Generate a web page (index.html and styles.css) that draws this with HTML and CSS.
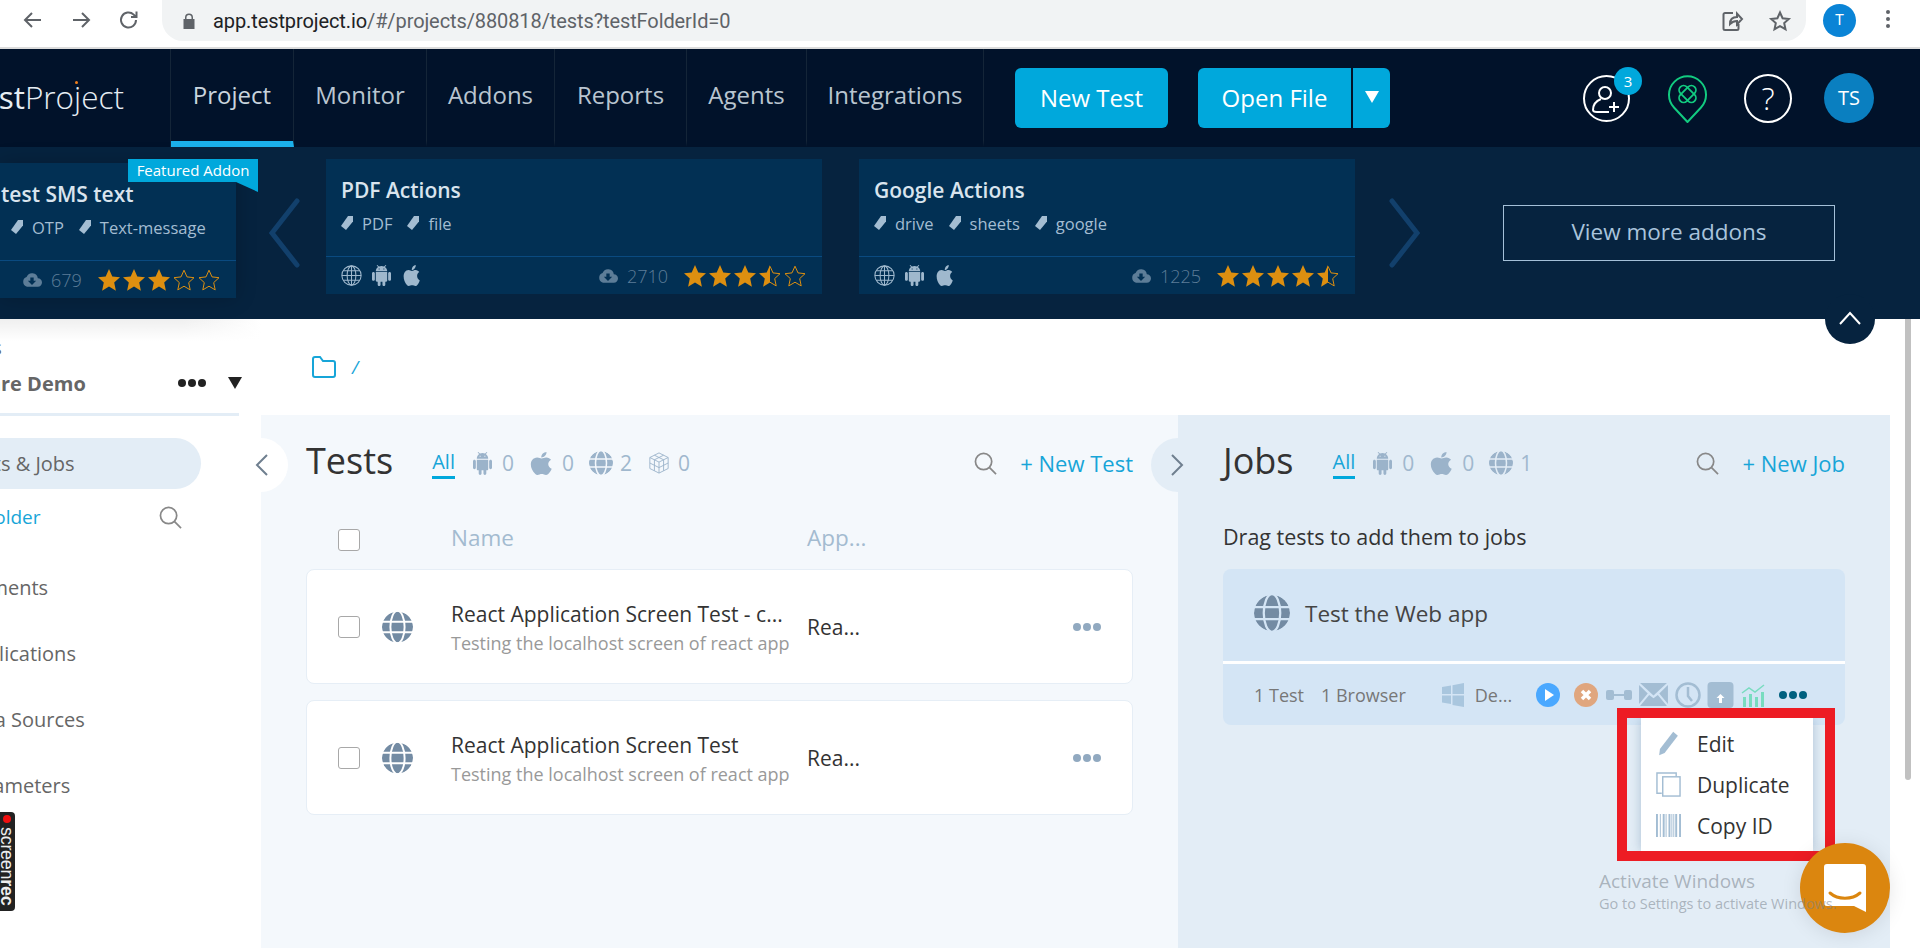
FILE: index.html
```html
<!DOCTYPE html>
<html lang="en">

<head>
	<meta charset="UTF-8">
	<title>TestProject</title>
	<link rel="stylesheet" href="styles.css">
</head>

<body>
	<svg class="sprites" width="0" height="0">
		<defs>
			<mask id="globe-cut">
				<circle cx="12" cy="12" r="12" fill="#fff" />
				<g fill="none" stroke="#000" stroke-width="1.5">
					<ellipse cx="12" cy="12" rx="5.5" ry="12.5" />
					<path d="M0 8h24M0 16h24" />
				</g>
			</mask>
			<symbol id="i-globe" viewBox="0 0 24 24">
				<circle cx="12" cy="12" r="12" fill="currentColor" mask="url(#globe-cut)" />
			</symbol>
			<symbol id="i-globe-line" viewBox="0 0 24 24">
				<g fill="none" stroke="currentColor" stroke-width="1.2">
					<circle cx="12" cy="12" r="11" />
					<ellipse cx="12" cy="12" rx="5" ry="11" />
					<path d="M12 1v22M1 12h22M2.600 6.500h18.800M2.600 17.500h18.800" />
				</g>
			</symbol>
			<symbol id="i-android" viewBox="2 0 20 24" preserveAspectRatio="none">
				<path fill="currentColor" d="M6 18c0 .55.45 1 1 1h1v3.500c0 .83.67 1.500 1.500 1.500s1.500-.67 1.500-1.500V19h2v3.500c0 .83.67 1.500 1.500 1.500s1.500-.67 1.500-1.500V19h1c.55 0 1-.45 1-1V8H6v10zM3.500 8C2.670 8 2 8.670 2 9.500v7c0 .83.67 1.500 1.500 1.500S5 17.330 5 16.500v-7C5 8.670 4.330 8 3.500 8zm17 0c-.83 0-1.500.67-1.500 1.500v7c0 .83.67 1.500 1.500 1.500s1.500-.67 1.500-1.500v-7c0-.83-.67-1.500-1.500-1.500zm-4.970-5.840l1.300-1.300c.2-.2.2-.51 0-.71-.2-.2-.51-.2-.71 0l-1.480 1.480C13.850 1.230 12.950 1 12 1c-.96 0-1.860.23-2.660.63L7.850.15c-.2-.2-.51-.2-.71 0-.2.2-.2.51 0 .71l1.310 1.310C6.970 3.260 6 5.010 6 7h12c0-1.990-.97-3.750-2.470-4.840zM10 5H9V4h1v1zm5 0h-1V4h1v1z" />
			</symbol>
			<symbol id="i-apple" viewBox="3.800 3 16 18" preserveAspectRatio="none">
				<path fill="currentColor" d="M17.050 20.280c-.98.95-2.050.8-3.080.35-1.090-.46-2.090-.48-3.240 0-1.440.62-2.200.44-3.060-.35C2.790 15.250 3.510 7.590 9.050 7.310c1.350.07 2.290.74 3.080.8 1.180-.24 2.310-.93 3.570-.84 1.510.12 2.650.72 3.400 1.800-3.120 1.870-2.380 5.980.48 7.130-.57 1.500-1.310 2.990-2.540 4.090zM12.030 7.250c-.15-2.230 1.660-4.070 3.740-4.250.29 2.580-2.340 4.500-3.740 4.250z" />
			</symbol>
			<symbol id="i-box" viewBox="0 0 24 24">
				<g fill="none" stroke="currentColor" stroke-width="1">
					<path d="M12 1l10 5v12l-10 5-10-5V6z" />
					<path d="M2 6l10 5 10-5M12 11v12M7 3.500l10 5v12M17 3.500l-10 5v12M2 12l10 5 10-5" />
				</g>
			</symbol>
			<symbol id="i-search" viewBox="0 0 24 24">
				<g fill="none" stroke="currentColor" stroke-width="1.800">
					<circle cx="10" cy="10" r="8.500" />
					<path d="M16 16l7 7" />
				</g>
			</symbol>
			<symbol id="i-tag" viewBox="0 0 12 14">
				<path fill="currentColor" d="M7 0h5v5.500L5 14 0 10z" />
			</symbol>
			<symbol id="i-cloud" viewBox="0 0 24 24">
				<path fill="currentColor" d="M19 10a7 7 0 0 0-13.500-1.500A6 6 0 0 0 6 20h13a5 5 0 0 0 0-10zm-7 8l-5-5h3V9h4v4h3z" />
			</symbol>
			<symbol id="i-star" viewBox="0 0 24 24">
				<path fill="currentColor" d="M12 1l3.300 7.400 7.700.8-5.800 5.400 1.700 8.100L12 18.500l-6.900 4.200 1.700-8.100L1 9.200l7.700-.8z" />
			</symbol>
			<symbol id="i-star-o" viewBox="0 0 24 24">
				<path fill="none" stroke="currentColor" d="M12 2.200l3 6.700 7 .8-5.300 4.900 1.500 7.300-6.200-3.700-6.200 3.700 1.500-7.300L2 9.700l7-.8z" />
			</symbol>
			<symbol id="i-star-half" viewBox="0 0 24 24">
				<path fill="none" stroke="currentColor" d="M12 2.200l3 6.700 7 .8-5.300 4.900 1.500 7.300-6.200-3.700" />
				<path fill="currentColor" d="M12 1l-3.300 7.400-7.700.8 5.800 5.400-1.700 8.100 6.900-4.200z" />
			</symbol>
		</defs>
	</svg>

	<header class="browser-bar">
		<svg class="chrome-icon first" viewBox="0 0 24 24"><path d="M20 12H5M11 5l-7 7 7 7" /></svg>
		<svg class="chrome-icon" viewBox="0 0 24 24"><path d="M4 12h15M13 5l7 7-7 7" /></svg>
		<svg class="chrome-icon" viewBox="0 0 24 24"><path d="M19 12a7.500 7.500 0 1 1-2.300-5.400L19 9M19.500 3.500V9H14" /></svg>
		<div class="omnibox">
			<svg class="lock" viewBox="0 0 12 16"><path d="M2 6V4.500a4 4 0 0 1 8 0V6h1.500v10H.5V6zm1.500 0h5V4.500a2.500 2.500 0 0 0-5 0z" /></svg>
			<span class="url">app.testproject.io<span class="url-dim">/#/projects/880818/tests?testFolderId=0</span></span>
			<svg class="chrome-icon share" viewBox="0 0 24 24"><path d="M13 4h-8a1.500 1.500 0 0 0-1.500 1.500v14A1.500 1.500 0 0 0 5 21h12a1.500 1.500 0 0 0 1.500-1.500V15M10 15c0-5 3-7 7-7V4.500L22 10l-5 5.500V12c-3 0-5 1-7 3z" /></svg>
			<svg class="chrome-icon star" viewBox="0 0 24 24"><path d="M12 3.500l2.600 5.700 6.200.7-4.600 4.200 1.300 6.100-5.500-3.100-5.500 3.100 1.300-6.100-4.600-4.200 6.200-.7z" /></svg>
		</div>
		<div class="chrome-avatar">T</div>
		<div class="chrome-menu"><i></i><i></i><i></i></div>
	</header>

	<nav class="topnav">
		<div class="logo"><span class="logo-name"><b>Test</b>Project</span><i class="logo-dot"></i></div>
		<a class="nav-item active">Project</a>
		<a class="nav-item">Monitor</a>
		<a class="nav-item">Addons</a>
		<a class="nav-item">Reports</a>
		<a class="nav-item">Agents</a>
		<a class="nav-item">Integrations</a>
		<span class="btn new-test">New Test</span>
		<span class="btn open-file">Open File</span>
		<span class="btn open-caret"><i></i></span>
		<div class="nav-user">
			<svg viewBox="0 0 47 49" fill="none" stroke="#fff" stroke-width="2"><circle cx="23.500" cy="24.500" r="22.500" /><circle cx="22" cy="19" r="6" /><path d="M18 25c-5 2-8 6-8 11 0 2 2 2 4 2h12M31 28v10M26 33h10" /></svg>
			<span class="badge">3</span>
		</div>
		<svg class="nav-pin" viewBox="0 0 39 49" fill="none" stroke="#12cb80" stroke-width="2"><path d="M19.500 48L6 33.500A18.500 18.500 0 1 1 33 33.500z" /><g stroke-width="1.800"><rect x="9.500" y="15.500" width="20" height="9" rx="4.500" transform="rotate(45 19.500 20)" /><rect x="9.500" y="15.500" width="20" height="9" rx="4.500" transform="rotate(-45 19.500 20)" /></g></svg>
		<div class="nav-help">?</div>
		<div class="nav-avatar">TS</div>
	</nav>

	<section class="addons">
		<article class="addon addon-first">
			<h3 class="addon-title">test SMS text</h3>
			<div class="addon-tags">
				<svg class="tag"><use href="#i-tag" /></svg>OTP
				<svg class="tag"><use href="#i-tag" /></svg>Text-message
			</div>
			<div class="addon-foot">
				<span class="addon-count"><svg class="cloud"><use href="#i-cloud" /></svg>679</span>
				<span class="stars">
					<svg><use href="#i-star" /></svg><svg><use href="#i-star" /></svg><svg><use href="#i-star" /></svg><svg><use href="#i-star-o" /></svg><svg><use href="#i-star-o" /></svg>
				</span>
			</div>
			<span class="flag">Featured Addon</span>
		</article>
		<svg class="addon-arrow prev" viewBox="0 0 32 70"><path d="M29 3L4 35l25 32" /></svg>
		<article class="addon">
			<h3 class="addon-title">PDF Actions</h3>
			<div class="addon-tags">
				<svg class="tag"><use href="#i-tag" /></svg>PDF
				<svg class="tag"><use href="#i-tag" /></svg>file
			</div>
			<div class="addon-foot">
				<span class="platforms">
					<svg class="p-globe"><use href="#i-globe-line" /></svg><svg class="p-android"><use href="#i-android" /></svg><svg class="p-apple"><use href="#i-apple" /></svg>
				</span>
				<span class="addon-count"><svg class="cloud"><use href="#i-cloud" /></svg>2710</span>
				<span class="stars">
					<svg><use href="#i-star" /></svg><svg><use href="#i-star" /></svg><svg><use href="#i-star" /></svg><svg><use href="#i-star-half" /></svg><svg><use href="#i-star-o" /></svg>
				</span>
			</div>
		</article>
		<article class="addon addon-last">
			<h3 class="addon-title">Google Actions</h3>
			<div class="addon-tags">
				<svg class="tag"><use href="#i-tag" /></svg>drive
				<svg class="tag"><use href="#i-tag" /></svg>sheets
				<svg class="tag"><use href="#i-tag" /></svg>google
			</div>
			<div class="addon-foot">
				<span class="platforms">
					<svg class="p-globe"><use href="#i-globe-line" /></svg><svg class="p-android"><use href="#i-android" /></svg><svg class="p-apple"><use href="#i-apple" /></svg>
				</span>
				<span class="addon-count"><svg class="cloud"><use href="#i-cloud" /></svg>1225</span>
				<span class="stars">
					<svg><use href="#i-star" /></svg><svg><use href="#i-star" /></svg><svg><use href="#i-star" /></svg><svg><use href="#i-star" /></svg><svg><use href="#i-star-half" /></svg>
				</span>
			</div>
		</article>
		<svg class="addon-arrow next" viewBox="0 0 32 70"><path d="M3 3l25 32L3 67" /></svg>
		<a class="more-addons">View more addons</a>
	</section>

	<div class="content">
		<aside class="sidebar">
			<div class="side-label">Projects</div>
			<div class="side-project">
				<span class="side-project-name">Software Demo</span>
				<span class="side-dots"><i></i><i></i><i></i></span>
				<i class="side-caret"></i>
			</div>
			<div class="side-link active"><span>Tests &amp; Jobs</span></div>
			<div class="side-folder">
				<span>+ New Folder</span>
				<svg class="icon-search"><use href="#i-search" /></svg>
			</div>
			<div class="side-link"><span>Elements</span></div>
			<div class="side-link"><span>Applications</span></div>
			<div class="side-link"><span>Data Sources</span></div>
			<div class="side-link"><span>Parameters</span></div>
		</aside>

		<main class="main">
			<div class="breadcrumb">
				<svg class="folder" viewBox="0 0 24 22"><path d="M1 3a2 2 0 0 1 2-2h5l3 4h10a2 2 0 0 1 2 2v12a2 2 0 0 1-2 2H3a2 2 0 0 1-2-2z" /></svg>
				<span>/</span>
			</div>
			<div class="panels">
				<section class="panel tests">
					<span class="panel-toggle left"><svg viewBox="0 0 14 24"><path d="M12 2L2 12l10 10" /></svg></span>
					<div class="panel-head">
						<h2 class="panel-title">Tests</h2>
						<a class="filter-all">All</a>
						<span class="filter"><svg class="f-android"><use href="#i-android" /></svg>0</span>
						<span class="filter"><svg class="f-apple"><use href="#i-apple" /></svg>0</span>
						<span class="filter f-globe-wrap"><svg class="f-globe"><use href="#i-globe" /></svg>2</span>
						<span class="filter f-box-wrap"><svg class="f-box"><use href="#i-box" /></svg>0</span>
						<svg class="icon-search head-search"><use href="#i-search" /></svg>
						<a class="panel-new">+ New Test</a>
					</div>
					<div class="test-cols">
						<span class="check"></span>
						<span></span>
						<span>Name</span>
						<span>App...</span>
					</div>
					<div class="test-row">
						<span class="check"></span>
						<svg class="row-globe"><use href="#i-globe" /></svg>
						<div>
							<div class="test-name">React Application Screen Test - c...</div>
							<div class="test-desc">Testing the localhost screen of react app</div>
						</div>
						<span class="test-app">Rea...</span>
						<span class="row-dots"><i></i><i></i><i></i></span>
					</div>
					<div class="test-row">
						<span class="check"></span>
						<svg class="row-globe"><use href="#i-globe" /></svg>
						<div>
							<div class="test-name">React Application Screen Test</div>
							<div class="test-desc">Testing the localhost screen of react app</div>
						</div>
						<span class="test-app">Rea...</span>
						<span class="row-dots"><i></i><i></i><i></i></span>
					</div>
				</section>

				<section class="panel jobs">
					<span class="panel-toggle right"><svg viewBox="0 0 14 24"><path d="M2 2l10 10L2 22" /></svg></span>
					<div class="panel-head">
						<h2 class="panel-title">Jobs</h2>
						<a class="filter-all">All</a>
						<span class="filter"><svg class="f-android"><use href="#i-android" /></svg>0</span>
						<span class="filter"><svg class="f-apple"><use href="#i-apple" /></svg>0</span>
						<span class="filter f-globe-wrap"><svg class="f-globe"><use href="#i-globe" /></svg>1</span>
						<svg class="icon-search head-search"><use href="#i-search" /></svg>
						<a class="panel-new">+ New Job</a>
					</div>
					<p class="jobs-hint">Drag tests to add them to jobs</p>
					<div class="job-card">
						<div class="job-head">
							<svg class="job-globe"><use href="#i-globe" /></svg>
							<span>Test the Web app</span>
						</div>
						<div class="job-foot">
							<span class="job-tests">1 Test</span>
							<span class="job-browser">1 Browser</span>
							<svg class="ji ji-win" viewBox="0 0 22 24"><path d="M0 4l9-1.500V11H0zM10.500 2.300L22 0v11H10.500zM0 12.500h9V21L0 19.500zM10.500 12.500H22V24l-11.500-2z" /></svg>
							<span class="job-device">De...</span>
							<svg class="ji ji-play" viewBox="0 0 24 24"><circle cx="12" cy="12" r="12" /><path class="w" d="M9 6l9 6-9 6z" /></svg>
							<svg class="ji ji-stop" viewBox="0 0 24 24"><circle cx="12" cy="12" r="12" /><path class="ws" d="M8 8l8 8M16 8l-8 8" /></svg>
							<svg class="ji ji-link" viewBox="0 0 26 12"><rect x="0" y="1" width="8" height="10" rx="2" /><rect x="18" y="1" width="8" height="10" rx="2" /><rect x="7" y="5" width="12" height="2" /></svg>
							<svg class="ji ji-mail" viewBox="0 0 30 26"><path d="M1 1h28L15 14zM0 3l9 9-9 11zM30 3l-9 9 9 11zM1 25l9.500-11.500L15 17l4.500-3.500L29 25z" /></svg>
							<svg class="ji ji-clock" viewBox="0 0 26 26"><circle cx="13" cy="13" r="11.500" /><path d="M13 5v9l4 5" /></svg>
							<svg class="ji ji-upload" viewBox="0 0 26 26"><rect width="26" height="26" rx="4" /><path class="w" d="M9 16l4-4 4 4h-2.500v5h-3v-5z" /></svg>
							<svg class="ji ji-chart" viewBox="0 0 24 24"><path d="M2 14h3v10H2zM8 11h3v13H8zM14 14h3v10h-3zM20 9h3v15h-3z" /><path class="cs" d="M1 10l7-5 6 4 9-7" /></svg>
							<span class="job-dots"><i></i><i></i><i></i></span>
						</div>
					</div>
					<div class="job-menu">
						<div class="job-menu-item">
							<svg viewBox="0 0 26 32"><path d="M19 1l6 5L8 28l-7 3 1-8z" /></svg>Edit
						</div>
						<div class="job-menu-item">
							<svg viewBox="0 0 26 26" class="dup"><path d="M21 5V1H1v21h5" /><rect x="7" y="5" width="18" height="20" /></svg>Duplicate
						</div>
						<div class="job-menu-item">
							<svg viewBox="0 0 26 24"><path d="M0 0h2v24H0zM4 0h1v24H4zM7 0h2v24H7zM10 0h1v24h-1zM13 0h2v24h-2zM16 0h1v24h-1zM18 0h1v24h-1zM20 0h2v24h-2zM24 0h2v24h-2z" /></svg>Copy ID
						</div>
					</div>
					<div class="red-box"></div>
				</section>
				<div class="page-gutter"></div>
			</div>
		</main>
	</div>

	<div class="collapse-strip"><svg viewBox="0 0 24 14"><path d="M2 13L12 2l10 11" /></svg></div>
	<div class="scrollbar-thumb"></div>
	<div class="screenrec"><i></i><span>screen<b>rec</b></span></div>
	<div class="chat-button">
		<svg viewBox="0 0 42 48"><path d="M3 0h36a3 3 0 0 1 3 3v45l-12-6H3a3 3 0 0 1-3-3V3a3 3 0 0 1 3-3z" fill="#fff" /><path d="M6 29c8 7 22 7 30 0" fill="none" stroke="#db860f" stroke-width="3" stroke-linecap="round" /></svg>
	</div>
	<div class="activate">
		<div class="activate-title">Activate Windows</div>
		<div class="activate-sub">Go to Settings to activate Windows.</div>
	</div>
</body>

</html>
```

FILE: styles.css
```css
* {
	box-sizing: border-box;
}

html,
body {
	margin: 0;
	height: 948px;
	overflow: hidden;
}

body {
	position: relative;
	background-color: #fff;
	color: #333;
	font-family: "Open Sans", sans-serif;
}

h2,
h3,
p {
	margin: 0;
	font-weight: normal;
}

.sprites {
	position: absolute;
}

/* browser chrome */
.browser-bar {
	display: flex;
	align-items: flex-start;
	height: 49px;
	background-color: #fff;
	border-bottom: 2px solid #dcdcdc;
}

.chrome-icon {
	flex: none;
	width: 24px;
	height: 24px;
	margin: 8px 24px 0 0;
	fill: none;
	stroke: #5f6368;
	stroke-width: 2;
}

.chrome-icon.first {
	margin-left: 21px;
}

.omnibox {
	display: flex;
	align-items: center;
	width: 1644px;
	height: 41px;
	margin-left: -3px;
	padding: 0 0 0 21px;
	background-color: #f1f3f4;
	border-radius: 0 0 21px 21px;
	font-family: "Roboto", sans-serif;
	font-size: 20px;
}

.lock {
	width: 12px;
	height: 16px;
	margin-right: 18px;
	fill: #5f6368;
}

.url {
	color: #202124;
	white-space: nowrap;
	letter-spacing: -0.1px;
}

.url-dim {
	color: #5f6368;
}

.omnibox .chrome-icon {
	margin: 0;
}

.omnibox .share {
	margin-left: auto;
}

.omnibox .star {
	margin: 0 14px 0 24px;
}

.chrome-avatar {
	flex: none;
	width: 33px;
	height: 33px;
	margin: 4px 0 0 17px;
	border-radius: 50%;
	background-color: #0a84d6;
	color: #fff;
	font: 15px/33px "Roboto", sans-serif;
	text-align: center;
}

.chrome-menu {
	display: flex;
	flex-direction: column;
	gap: 3px;
	margin: 10px 0 0 30px;
}

.chrome-menu i {
	width: 4px;
	height: 4px;
	border-radius: 50%;
	background-color: #5f6368;
}

/* top nav */
.topnav {
	display: flex;
	align-items: center;
	height: 98px;
	background-color: #01122a;
}

.logo {
	position: relative;
	display: flex;
	justify-content: flex-end;
	align-self: stretch;
	align-items: center;
	flex: none;
	width: 171px;
	padding: 0 46px 4px 0;
	overflow: hidden;
	border-right: 1px solid #142538;
}

.logo-name {
	color: #e6edf3;
	font-size: 31.500px;
	font-weight: 300;
	white-space: nowrap;
}

.logo-name b {
	font-weight: 400;
}

.logo-dot {
	position: absolute;
	left: 75px;
	top: 32px;
	width: 3px;
	height: 3px;
	border-radius: 50%;
	background-color: #ef7d1a;
}

.nav-item {
	display: flex;
	align-items: center;
	align-self: stretch;
	justify-content: center;
	flex: none;
	width: 133px;
	padding-bottom: 2px;
	border-right: 1px solid #142538;
	border-bottom: 6px solid transparent;
	color: #b9c5d0;
	font-size: 24px;
}

.nav-item:nth-of-type(1) {
	width: 123px;
}

.nav-item:nth-of-type(3) {
	width: 128px;
}

.nav-item:nth-of-type(4) {
	width: 132px;
}

.nav-item:nth-of-type(5) {
	width: 120px;
}

.nav-item:nth-of-type(6) {
	width: 177px;
}

.nav-item.active {
	color: #c9d4de;
	border-bottom-color: #1bb1ec;
}

.btn {
	display: flex;
	align-items: center;
	justify-content: center;
	flex: none;
	height: 60px;
	padding-bottom: 2px;
	background-color: #00a8dc;
	color: #fff;
	font-size: 24px;
}

.new-test {
	width: 153px;
	margin-left: 31px;
	border-radius: 6px;
}

.open-file {
	width: 153px;
	margin-left: 30px;
	border-radius: 6px 0 0 6px;
}

.open-caret {
	width: 37px;
	margin-left: 2px;
	border-radius: 0 6px 6px 0;
}

.open-caret i {
	border-left: 7px solid transparent;
	border-right: 7px solid transparent;
	border-top: 12px solid #fff;
}

.nav-user {
	position: relative;
	flex: none;
	width: 47px;
	height: 49px;
	margin-left: 193px;
}

.nav-user svg {
	display: block;
	width: 47px;
	height: 49px;
}

.badge {
	position: absolute;
	left: 31px;
	top: -7px;
	width: 28px;
	height: 28px;
	border-radius: 50%;
	background-color: #00a8dc;
	color: #fff;
	font-size: 15px;
	line-height: 28px;
	text-align: center;
}

.nav-pin {
	flex: none;
	width: 39px;
	height: 49px;
	margin-left: 38px;
}

.nav-help {
	flex: none;
	width: 48px;
	height: 49px;
	margin-left: 37px;
	border: 2px solid #fff;
	border-radius: 50%;
	color: #fff;
	font-size: 31px;
	font-weight: 300;
	line-height: 44px;
	text-align: center;
}

.nav-avatar {
	flex: none;
	width: 50px;
	height: 50px;
	margin-left: 32px;
	border-radius: 50%;
	background-color: #0a7fc0;
	color: #fff;
	font-size: 20px;
	line-height: 50px;
	text-align: center;
}

/* addons strip */
.addons {
	display: flex;
	align-items: flex-start;
	height: 172px;
	padding-top: 12px;
	background-color: #06233f;
}

.addon {
	position: relative;
	display: flex;
	flex-direction: column;
	flex: none;
	width: 496px;
	height: 135px;
	background-color: #023054;
}

.addon-first {
	width: 236px;
	margin-top: 4px;
	box-shadow: 0 0 20px rgba(0, 0, 0, 0.2);
}

.addon-last {
	margin-left: 37px;
}

.addon-title {
	padding: 17px 0 0 15px;
	color: #d9e4ee;
	font-size: 21px;
	font-weight: 600;
	line-height: 28px;
}

.addon-first .addon-title {
	padding-left: 1px;
}

.addon-tags {
	display: flex;
	align-items: center;
	height: 24px;
	margin-top: 7px;
	padding-left: 15px;
	color: #a4bdd2;
	font-size: 16.500px;
}

.addon-first .addon-tags {
	padding-left: 11px;
}

.tag {
	width: 12px;
	height: 14px;
	margin: 0 9px 0 0;
	color: #a4bdd2;
}

.tag:not(:first-child) {
	margin-left: 15px;
}

.addon-foot {
	display: flex;
	align-items: center;
	height: 38px;
	margin-top: auto;
	padding: 0 15px;
	border-top: 1px solid #0a4a80;
	color: #a4bdd2;
}

.platforms {
	display: flex;
	align-items: center;
	color: #9fb8cd;
}

.p-globe {
	width: 21px;
	height: 21px;
}

.p-android {
	width: 19px;
	height: 21px;
	margin-left: 10px;
}

.p-apple {
	width: 17px;
	height: 21px;
	margin-left: 12px;
}

.addon-count {
	display: flex;
	align-items: center;
	margin-left: auto;
	color: #5d7d98;
	font-size: 18px;
	font-weight: 300;
}

.addon-first .addon-count {
	margin-left: 6px;
}

.cloud {
	width: 22px;
	height: 20px;
	margin-right: 8px;
	color: #5d7d98;
}

.stars {
	display: flex;
	gap: 1px;
	margin-left: 15px;
	color: #dd8f10;
}

.stars svg {
	width: 24px;
	height: 24px;
}

.flag {
	position: absolute;
	left: 128px;
	top: -4px;
	width: 130px;
	height: 23px;
	background-color: #00a8dc;
	color: #fff;
	font-size: 15px;
	line-height: 23px;
	text-align: center;
	white-space: nowrap;
}

.flag::after {
	content: "";
	position: absolute;
	right: 0;
	top: 23px;
	border-top: 10px solid #00a8dc;
	border-left: 22px solid transparent;
}

.addon-arrow {
	flex: none;
	width: 32px;
	height: 70px;
	margin-top: 39px;
	fill: none;
	stroke: #12406c;
	stroke-width: 5;
	stroke-linecap: round;
}

.addon-arrow.prev {
	margin: 39px 26px 0 32px;
}

.addon-arrow.next {
	margin-left: 34px;
}

.more-addons {
	flex: none;
	width: 332px;
	height: 56px;
	margin: 46px 0 0 82px;
	border: 1px solid #a4c0d8;
	color: #a9c4dc;
	font-size: 22.500px;
	line-height: 52px;
	text-align: center;
}

/* sidebar */
.content {
	display: flex;
	height: 629px;
}

.sidebar {
	flex: none;
	width: 261px;
	background:
		linear-gradient(to bottom, rgba(255, 255, 255, 0), #fff 22px) no-repeat 0 0 / 100% 22px,
		linear-gradient(to right, #efefef 70%, #fff) no-repeat 0 0 / 100% 22px;
	color: #666;
	font-size: 20px;
	overflow: hidden;
}

.side-label {
	height: 27px;
	margin-top: 15px;
	margin-left: -73px;
	color: #666;
	font-size: 20px;
	line-height: 27px;
}

.side-project {
	display: flex;
	align-items: center;
	width: 239px;
	height: 55px;
	padding-bottom: 8px;
	border-bottom: 3px solid #e3edf6;
}

.side-project-name {
	margin-left: -68px;
	color: #666;
	font-weight: 700;
	white-space: nowrap;
}

.side-dots,
.row-dots,
.job-dots {
	display: flex;
	gap: 2px;
}

.side-dots {
	margin-left: 92px;
}

.side-dots i,
.row-dots i,
.job-dots i {
	width: 8px;
	height: 8px;
	border-radius: 50%;
	background-color: #222;
}

.side-caret {
	margin-left: 22px;
	border-left: 7px solid transparent;
	border-right: 7px solid transparent;
	border-top: 12px solid #222;
}

.side-link {
	display: flex;
	align-items: center;
	height: 66px;
	white-space: nowrap;
}

.side-link span {
	margin-left: -38px;
}

.side-link.active {
	width: 201px;
	height: 51px;
	margin-top: 22px;
	border-radius: 0 26px 26px 0;
	background-color: #e3edf6;
}

.side-folder {
	display: flex;
	align-items: center;
	height: 56px;
	margin-bottom: 9px;
	color: #17a5d8;
	font-size: 19px;
	white-space: nowrap;
}

.side-folder span {
	margin-left: -76px;
}

.side-folder .icon-search {
	margin-left: 118px;
}

.icon-search {
	flex: none;
	width: 23px;
	height: 23px;
	color: #888;
}

/* main area */
.main {
	display: flex;
	flex-direction: column;
	flex: 1;
	min-width: 0;
}

.breadcrumb {
	display: flex;
	align-items: center;
	flex: none;
	height: 96px;
	padding-left: 51px;
	color: #17a5d8;
	font-size: 18px;
	font-style: italic;
}

.folder {
	width: 24px;
	height: 22px;
	margin-right: 16px;
	fill: none;
	stroke: #17a5d8;
	stroke-width: 2;
}

.panels {
	display: flex;
	flex: 1;
}

.panel {
	position: relative;
	flex: none;
	padding: 0 45px;
}

.tests {
	width: 917px;
	background-color: #f4f8fc;
}

.jobs {
	width: 712px;
	background-color: #e3edf6;
}

.page-gutter {
	flex: 1;
	background-color: #fff;
}

.panel-toggle {
	position: absolute;
	top: 23px;
	display: flex;
	align-items: center;
	width: 27px;
	height: 54px;
}

.panel-toggle svg {
	width: 14px;
	height: 24px;
	fill: none;
	stroke: #6f7f8f;
	stroke-width: 2;
}

.panel-toggle.left {
	left: 0;
	justify-content: flex-start;
	border-radius: 0 27px 27px 0;
	background-color: #fff;
}

.panel-toggle.left svg {
	margin-left: -6px;
}

.panel-toggle.right {
	left: -27px;
	justify-content: flex-end;
	border-radius: 27px 0 0 27px;
	background-color: #e3edf6;
}

.panel-toggle.right svg {
	margin-right: -6px;
}

.panel-head {
	display: flex;
	align-items: center;
	height: 96px;
}

.panel-title {
	margin-top: -5px;
	color: #333;
	font-size: 36px;
	line-height: 48px;
}

.filter-all {
	margin: 3px 0 0 39px;
	padding-bottom: 2px;
	border-bottom: 3px solid #00a8dc;
	color: #17a5d8;
	font-size: 20px;
	line-height: 24px;
}

.filter {
	display: flex;
	align-items: center;
	margin-left: 18px;
	color: #a0b8ce;
	font-size: 21px;
}

.filter svg {
	margin-right: 10px;
	color: #9bb3ca;
}

.filter.f-globe-wrap {
	margin-left: 15px;
}

.filter.f-box-wrap {
	margin-left: 16px;
}

.f-android {
	width: 19px;
	height: 23px;
}

.f-apple {
	width: 22px;
	height: 23px;
	margin-left: -2px;
}

.filter .f-globe {
	width: 24px;
	height: 24px;
	margin-right: 7px;
}

.filter .f-box {
	width: 22px;
	height: 24px;
	margin-right: 8px;
}

.head-search {
	margin-left: auto;
}

.panel-new {
	margin-left: 23px;
	color: #17a5d8;
	font-size: 22px;
	white-space: nowrap;
}

.check {
	width: 22px;
	height: 22px;
	border: 1px solid #a8a8a8;
	border-radius: 3px;
	background-color: #fff;
}

.test-cols,
.test-row {
	display: grid;
	grid-template-columns: 44px 69px 356px 1fr auto;
	align-items: center;
}

.test-cols {
	height: 58px;
	padding: 0 32px;
	color: #a3bbd0;
	font-size: 22.500px;
}

.test-cols > span:nth-child(n+3) {
	margin-top: -6px;
}

.test-row {
	height: 115px;
	margin-bottom: 16px;
	padding: 0 31px;
	background-color: #fff;
	border: 1px solid #e6eef6;
	border-radius: 8px;
}

.row-globe {
	width: 31px;
	height: 32px;
	color: #738ba3;
}

.test-name {
	margin-top: 2px;
	color: #333;
	font-size: 21px;
	line-height: 30px;
	white-space: nowrap;
}

.test-desc {
	color: #999;
	font-size: 18px;
	line-height: 28px;
	white-space: nowrap;
}

.test-app {
	color: #333;
	font-size: 21px;
}

.row-dots i {
	background-color: #91a9c0;
}

/* job card */
.jobs-hint {
	height: 58px;
	color: #333;
	font-size: 21.500px;
	line-height: 52px;
	white-space: nowrap;
}

.job-card {
	height: 156px;
	background-color: #d4e5f5;
	border-radius: 8px;
}

.job-head {
	display: flex;
	align-items: center;
	height: 95px;
	padding: 0 0 4px 31px;
	border-bottom: 3px solid #fff;
	color: #444;
	font-size: 22.500px;
}

.job-globe {
	width: 36px;
	height: 36px;
	margin-right: 15px;
	color: #738ba3;
}

.job-foot {
	display: flex;
	align-items: center;
	height: 61px;
	padding-left: 31px;
	color: #777;
	font-size: 18px;
}

.job-browser {
	margin-left: 17px;
}

.ji {
	flex: none;
	fill: #a3bdd3;
}

.ji-win {
	width: 22px;
	height: 24px;
	margin-left: 36px;
	fill: #a9c6de;
}

.job-device {
	margin-left: 11px;
}

.ji-play {
	width: 24px;
	height: 24px;
	margin-left: 24px;
	fill: #4aa8ff;
}

.ji-stop {
	width: 24px;
	height: 24px;
	margin-left: 14px;
	fill: #e0a67e;
}

.w {
	fill: #fff;
}

.ws {
	fill: none;
	stroke: #fff;
	stroke-width: 3.500;
}

.ji-link {
	width: 26px;
	height: 12px;
	margin-left: 8px;
}

.ji-mail {
	width: 29px;
	height: 25px;
	margin-left: 7px;
}

.ji-clock {
	width: 26px;
	height: 26px;
	margin-left: 7px;
	fill: none;
	stroke: #a3bdd3;
	stroke-width: 2.500;
}

.ji-upload {
	width: 27px;
	height: 26px;
	margin-left: 6px;
}

.ji-chart {
	width: 24px;
	height: 24px;
	margin-left: 7px;
	fill: #79dcc0;
}

.cs {
	fill: none;
	stroke: #79dcc0;
	stroke-width: 1.500;
}

.job-dots {
	margin-left: 14px;
}

.job-dots i {
	background-color: #00607f;
}

.job-menu {
	position: absolute;
	left: 463px;
	top: 303px;
	width: 172px;
	height: 133px;
	padding-top: 5px;
	background-color: #fff;
	box-shadow: 0 0 10px rgba(120, 150, 180, 0.5);
	color: #333;
	font-size: 21px;
}

.job-menu-item {
	display: flex;
	align-items: center;
	height: 41px;
	padding-left: 15px;
}

.job-menu-item svg {
	width: 25px;
	height: 25px;
	margin-right: 16px;
	fill: #a3bdd3;
}

.job-menu-item .dup {
	fill: none;
	stroke: #a3bdd3;
	stroke-width: 1.500;
}

.red-box {
	position: absolute;
	left: 439px;
	top: 293px;
	width: 218px;
	height: 153px;
	border: 10px solid #ed1c24;
}

/* overlays */
.collapse-strip {
	position: absolute;
	left: 1825px;
	top: 294px;
	display: flex;
	align-items: center;
	justify-content: center;
	width: 50px;
	height: 50px;
	border-radius: 50%;
	background-color: #06233f;
}

.collapse-strip svg {
	width: 24px;
	height: 14px;
	margin-top: -2px;
	fill: none;
	stroke: #fff;
	stroke-width: 2;
}

.scrollbar-thumb {
	position: absolute;
	left: 1905px;
	top: 319px;
	width: 6px;
	height: 461px;
	border-radius: 0 0 3px 3px;
	background-color: #c1c1c1;
}

.screenrec {
	position: absolute;
	left: 0;
	top: 812px;
	width: 15px;
	height: 99px;
	border-radius: 0 4px 4px 0;
	background-color: #222;
	color: #eee;
	overflow: hidden;
}

.screenrec i {
	position: absolute;
	left: 3px;
	top: 3px;
	width: 8px;
	height: 8px;
	border-radius: 50%;
	background-color: #f01010;
}

.screenrec span {
	position: absolute;
	left: -2px;
	top: 15px;
	font-family: "Liberation Sans", sans-serif;
	font-size: 18px;
	line-height: 17px;
	letter-spacing: -0.3px;
	white-space: nowrap;
	writing-mode: vertical-rl;
}

.chat-button {
	position: absolute;
	left: 1800px;
	top: 843px;
	display: flex;
	align-items: center;
	justify-content: center;
	width: 90px;
	height: 90px;
	border-radius: 50%;
	background-color: #db860f;
	box-shadow: 0 2px 20px rgba(0, 0, 0, 0.1);
}

.chat-button svg {
	width: 42px;
	height: 48px;
}

.activate {
	position: absolute;
	left: 1599px;
	top: 868px;
	color: rgba(120, 130, 140, 0.55);
	white-space: nowrap;
}

.activate-title {
	font-size: 19px;
	line-height: 26px;
}

.activate-sub {
	font-size: 14.500px;
	line-height: 20px;
}
```
